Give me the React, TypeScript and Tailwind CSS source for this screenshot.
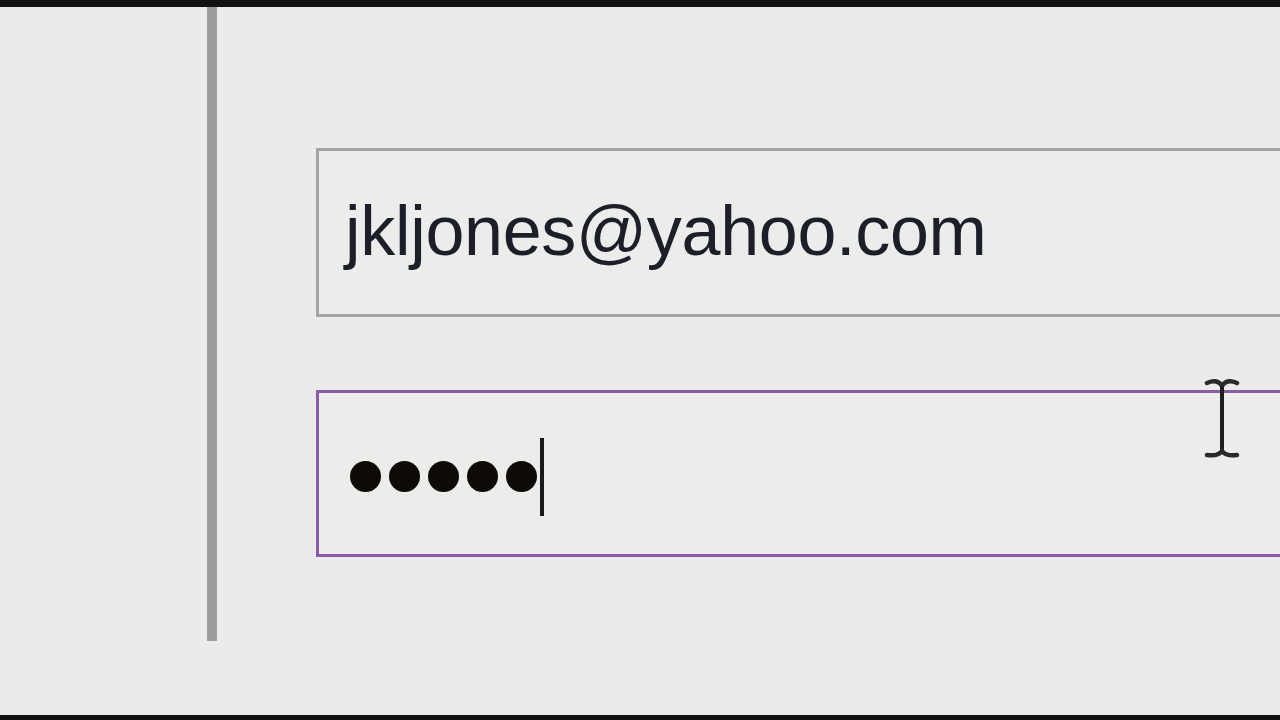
import React from 'react';

const IBeam = () => (
  <svg width="40" height="82" viewBox="0 0 40 82" fill="none" className="absolute left-[1202px] top-[378px]">
    <path d="M5 5 C12 2 17 3 20 8 C23 3 28 2 35 5" stroke="#2a2a2a" strokeWidth="4.5" strokeLinecap="round" />
    <path d="M20 8 V74" stroke="#1e1e1e" strokeWidth="4" />
    <path d="M5 77 C12 78 17 77 20 73 C23 77 28 78 35 77" stroke="#2a2a2a" strokeWidth="4.5" strokeLinecap="round" />
  </svg>
);

export default function App() {
  return (
    <div className="relative w-[1280px] h-[720px] overflow-hidden bg-[#ebebe9] flex flex-col font-['Liberation_Sans',Arial,sans-serif]">
      <div className="h-[7px] bg-[#111111] shrink-0" />

      <div className="flex flex-1">
        <div className="w-[207px] shrink-0" />
        <div className="w-[10px] h-[634px] shrink-0 bg-[#9a9d99]" />

        <form className="flex-1 pl-[99px] pt-[141px] flex flex-col gap-[73px]">
          {/* email */}
          <div className="h-[169px] w-[980px] border-[3px] border-r-0 border-[#a4a5a3] bg-[#ececea] flex items-center pl-[26px] pb-[4px]">
            <span className="text-[70px] leading-none text-[#1c1f28] tracking-[-0.3px]">jkljones@yahoo.com</span>
          </div>

          {/* password, focused */}
          <div className="h-[167px] w-[980px] border-[3px] border-r-0 border-[#8a5ba8] bg-[#ececea] flex items-center pl-[31px] pt-[6px]" aria-label="password">
            <div className="flex items-center gap-[8px]">
              <span className="w-[31px] h-[31px] rounded-full bg-[#0d0a08]" />
              <span className="w-[31px] h-[31px] rounded-full bg-[#0d0a08]" />
              <span className="w-[31px] h-[31px] rounded-full bg-[#0d0a08]" />
              <span className="w-[31px] h-[31px] rounded-full bg-[#0d0a08]" />
              <span className="w-[31px] h-[31px] rounded-full bg-[#0d0a08]" />
            </div>
            <span className="ml-[3px] w-[4px] h-[78px] bg-[#1a1a1a]" />
          </div>
        </form>
      </div>

      <div className="h-[5px] bg-[#111111] shrink-0" />
      <IBeam />
    </div>
  );
}
